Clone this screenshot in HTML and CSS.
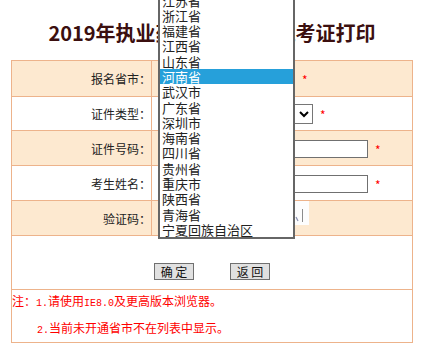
FILE: index.html
```html
<!DOCTYPE html>
<html lang="zh-CN">
<head>
<meta charset="utf-8">
<title>2019年执业药师资格考试准考证打印</title>
<link rel="stylesheet" href="styles.css">
</head>
<body>
<div class="page">
  <h1 class="title">2019年执业药师资格考试准考证打印</h1>
  <table class="form">
    <tr class="alt r1">
      <td class="label">报名省市：</td>
      <td class="field"><select class="sel sel-prov"><option>河南省</option></select><span class="req">*</span></td>
    </tr>
    <tr class="r2">
      <td class="label">证件类型：</td>
      <td class="field"><select class="sel sel-type"><option>身份证</option></select><span class="req">*</span></td>
    </tr>
    <tr class="alt r3">
      <td class="label">证件号码：</td>
      <td class="field"><input class="txt" type="text"><span class="req">*</span></td>
    </tr>
    <tr class="r3">
      <td class="label">考生姓名：</td>
      <td class="field"><input class="txt" type="text"><span class="req">*</span></td>
    </tr>
    <tr class="alt r3">
      <td class="label">验证码：</td>
      <td class="field captcha"><input class="txt code" type="text"><svg class="code-img" width="60" height="24" viewBox="0 0 60 24"><rect width="60" height="24" fill="#fdfdfd"/><path d="M6 8 L10 19 M12 7 L16 18 M20 10 L23 20 M28 6 L31 18 M36 9 L38 20" stroke="#c9ccd8" stroke-width="1.2" fill="none"/><path d="M47 16 L49 20" stroke="#8a90b0" stroke-width="1.2"/><path d="M53.5 8 L53.5 21" stroke="#8c8c8c" stroke-width="1"/></svg></td>
    </tr>
    <tr class="r6">
      <td colspan="2" class="actions"><div class="btns"><button class="btn" type="button">确 定</button><button class="btn" type="button">返 回</button></div></td>
    </tr>
    <tr class="r7">
      <td colspan="2" class="notes">
        <div class="note">注：<span class="mono">1.</span>请使用<span class="mono">IE8.0</span>及更高版本浏览器。</div>
        <div class="note indent"><span class="mono">2.</span>当前未开通省市不在列表中显示。</div>
      </td>
    </tr>
  </table>
  <ul class="listbox">
    <li>江苏省</li>
    <li>浙江省</li>
    <li>福建省</li>
    <li>江西省</li>
    <li>山东省</li>
    <li class="on">河南省</li>
    <li>武汉市</li>
    <li>广东省</li>
    <li>深圳市</li>
    <li>海南省</li>
    <li>四川省</li>
    <li>贵州省</li>
    <li>重庆市</li>
    <li>陕西省</li>
    <li>青海省</li>
    <li>宁夏回族自治区</li>
  </ul>
</div>
</body>
</html>
```
FILE: styles.css
```css
html, body {
  margin: 0;
  padding: 0;
  background: #fff;
}
body {
  font-family: "Noto Sans CJK SC", sans-serif;
  font-size: 12px;
  color: #222;
  overflow: hidden;
}
.page {
  position: relative;
  width: 431px;
  height: 358px;
  overflow: hidden;
}
.title {
  margin: 0 0 0 11px;
  width: 402px;
  padding-top: 20px;
  height: 26px;
  line-height: 26px;
  font-size: 20px;
  font-weight: bold;
  color: #3b0f0f;
  text-align: center;
  margin-bottom: 14px;
  white-space: nowrap;
}
.form {
  margin-left: 11px;
  width: 402px;
  border-collapse: collapse;
  border: 1px solid #edb38b;
}
.form td {
  border: 1px solid #edb38b;
  padding: 0;
}
.alt td {
  background: #fde9d0;
}
.r1 td { height: 35px; }
.r2 td { height: 33px; }
.r3 td { height: 34px; }
.r6 td { height: 53px; }
.r7 td { height: 52px; }
.label {
  width: 139px;
  text-align: right;
  white-space: nowrap;
  color: #222;
}
.field {
  padding-left: 6px !important;
  white-space: nowrap;
}
.sel {
  height: 20px;
  box-sizing: border-box;
  font-family: "Noto Sans CJK SC", sans-serif;
  font-size: 12px;
  vertical-align: middle;
  border: 1px solid #767676;
  background: #fff;
  margin: 0;
}
.sel-prov { width: 137px; }
.sel-type { width: 155px; }
.txt {
  box-sizing: border-box;
  width: 210px;
  height: 18px;
  border: 1px solid #707070;
  padding: 0 2px;
  margin: 0;
  vertical-align: middle;
  background: #fff;
}
.req {
  color: #f00;
  font-size: 12px;
  margin-left: 7px;
  vertical-align: -3px;
}
.captcha {
  vertical-align: top;
}
.code {
  width: 80px;
  margin-top: 8px;
  vertical-align: top;
}
.code-img {
  display: inline-block;
  vertical-align: top;
  margin-left: 11px;
}
.actions {
  vertical-align: top;
}
.btns {
  display: flex;
  justify-content: center;
  gap: 36px;
  padding-top: 27px;
}
.btn {
  width: 40px;
  height: 17px;
  box-sizing: border-box;
  padding: 0;
  margin: 0;
  border: 1px solid #707070;
  background: #e1e1e1;
  font-family: "Noto Sans CJK SC", sans-serif;
  font-size: 12px;
  line-height: 15px;
  color: #111;
}
.notes {
  color: #f00;
  vertical-align: top;
  white-space: nowrap;
}
.note {
  height: 27px;
  line-height: 27px;
}
.note:first-child {
  margin-top: -3px;
}
.notes .indent {
  padding-left: 25px;
}
.mono {
  font-family: "Liberation Mono", monospace;
  font-size: 10px;
  line-height: 1;
}
.listbox {
  position: absolute;
  left: 158px;
  top: -9.5px;
  width: 137px;
  box-sizing: border-box;
  margin: 0;
  padding: 0;
  list-style: none;
  border: 2px solid #666;
  background: #fff;
  font-size: 13px;
  color: #222;
}
.listbox li {
  height: 15.3px;
  line-height: 15.3px;
  padding-left: 2px;
  white-space: nowrap;
}
.listbox li.on {
  background: #26a0da;
  color: #fff;
}
```
